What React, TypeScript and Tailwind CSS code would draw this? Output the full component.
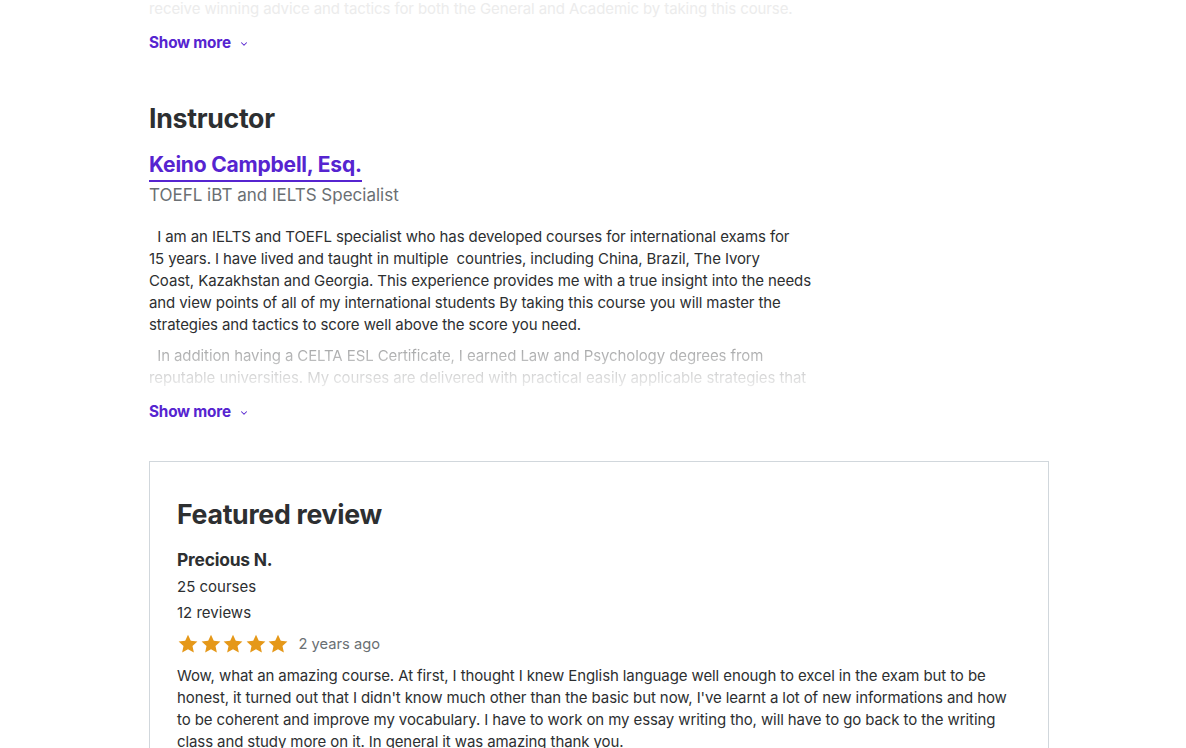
import React from "react";

const Chevron = () => (
  <svg width="10" height="10" viewBox="0 0 24 24" fill="none" stroke="currentColor" strokeWidth="2.5" strokeLinecap="round" strokeLinejoin="round" className="ml-[8px] mt-[2px]">
    <path d="M6 9l6 6 6-6" />
  </svg>
);

const ShowMore = () => (
  <button className="flex items-center h-[22px] text-[15.3px] font-bold text-[#5624d0] leading-[22px] tracking-[-0.2px]">
    Show more
    <Chevron />
  </button>
);

const Star = () => (
  <svg width="22" height="22" viewBox="0 0 24 24" className="mr-[0.5px]">
    <path fill="#e59819" d="M12 1.8l3.05 6.6 7.2.8-5.35 4.9 1.5 7.1L12 17.6l-6.4 3.6 1.5-7.1L1.75 9.2l7.2-.8z" />
  </svg>
);

export default function App() {
  return (
    <div className="min-h-[748px] bg-white text-[#2d2f31]" style={{ fontFamily: "Inter, 'Noto Sans', sans-serif" }}>
      <div className="pl-[149px] w-[1049px]">
        <div className="h-[22px] -mt-[2px] text-[15px] leading-[22px] text-[#ececec] whitespace-nowrap tracking-[-0.1px]">
          receive winning advice and tactics for both the General and Academic by taking this course.
        </div>
        <div className="mt-[12px]">
          <ShowMore />
        </div>

        <h2 className="mt-[47px] text-[26.7px] font-bold leading-[34px] text-[#2d2f31] tracking-[-0.3px]">Instructor</h2>
        <div className="mt-[17px] h-[30px]">
          <a className="inline-block text-[21px] font-bold leading-[26px] text-[#5624d0] border-b-2 border-[#5624d0] pb-[2px] tracking-[-0.2px]">
            Keino Campbell, Esq.
          </a>
        </div>
        <div className="mt-[1px] text-[17px] leading-[24px] text-[#6a6f73]">TOEFL iBT and IELTS Specialist</div>

        <div className="mt-[19px] text-[15px] leading-[22px] text-[#2d2f31] whitespace-nowrap tracking-[-0.1px]">
          <p>
            &nbsp;&nbsp;I am an IELTS and TOEFL specialist who has developed courses for international exams for
            <br />
            15 years. I have lived and taught in multiple&nbsp; countries, including China, Brazil, The Ivory
            <br />
            Coast, Kazakhstan and Georgia. This experience provides me with a true insight into the needs
            <br />
            and view points of all of my international students By taking this course you will master the
            <br />
            strategies and tactics to score well above the score you need.
          </p>
          <p className="mt-[9px] h-[44px] overflow-hidden [mask-image:linear-gradient(to_bottom,rgba(0,0,0,0.45),rgba(0,0,0,0.08))]">
            &nbsp;&nbsp;In addition having a CELTA ESL Certificate, I earned Law and Psychology degrees from
            <br />
            reputable universities. My courses are delivered with practical easily applicable strategies that
          </p>
        </div>
        <div className="mt-[12px]">
          <ShowMore />
        </div>

        <div className="mt-[38px] border border-[#d1d7dc] px-[27px] pt-[35px] pb-[24px]">
          <h2 className="text-[26.7px] font-bold leading-[34px] tracking-[-0.3px]">Featured review</h2>
          <div className="mt-[17px] text-[17.4px] font-bold leading-[24px] tracking-[-0.2px]">Precious N.</div>
          <div className="mt-[4px] text-[15px] leading-[22px]">25 courses</div>
          <div className="mt-[4px] text-[15px] leading-[22px]">12 reviews</div>
          <div className="mt-[9px] flex items-center h-[22px]">
            <div className="flex">
              <Star />
              <Star />
              <Star />
              <Star />
              <Star />
            </div>
            <span className="ml-[9px] text-[14.7px] text-[#6a6f73]">2 years ago</span>
          </div>
          <p className="mt-[10px] text-[15px] leading-[22px] whitespace-nowrap tracking-[-0.1px]">
            Wow, what an amazing course. At first, I thought I knew English language well enough to excel in the exam but to be
            <br />
            honest, it turned out that I didn't know much other than the basic but now, I've learnt a lot of new informations and how
            <br />
            to be coherent and improve my vocabulary. I have to work on my essay writing tho, will have to go back to the writing
            <br />
            class and study more on it. In general it was amazing thank you.
          </p>
        </div>
      </div>
    </div>
  );
}
